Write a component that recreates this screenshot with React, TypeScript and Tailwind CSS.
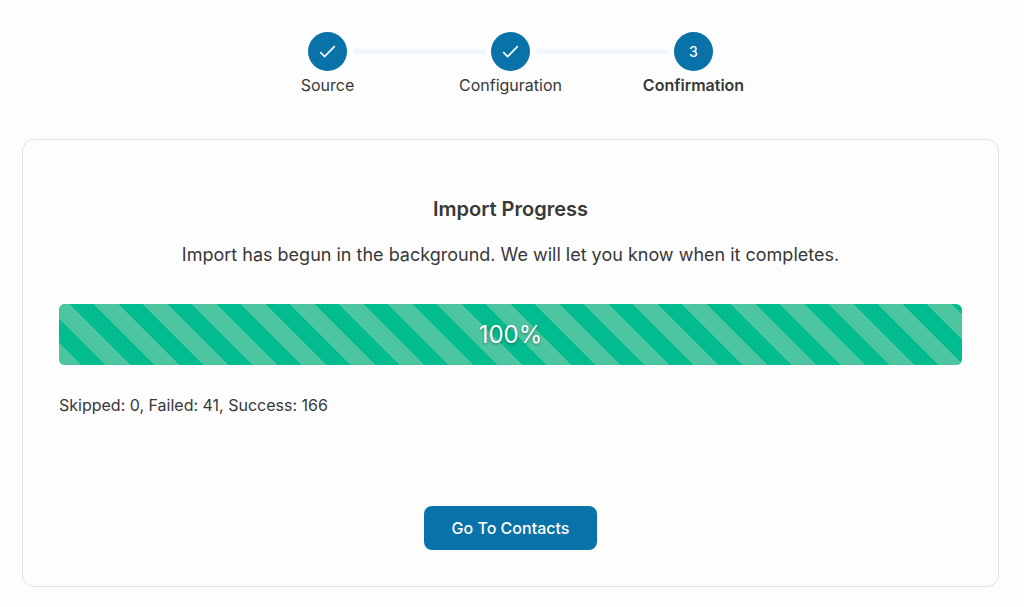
import { Fragment } from "react"

const steps = [
  { label: "Source", done: true },
  { label: "Configuration", done: true },
  { label: "Confirmation", done: false },
]

const result = { skipped: 0, failed: 41, success: 166 }

function CheckIcon() {
  return (
    <svg width="17" height="13" viewBox="0 0 17 13" fill="none" aria-hidden="true">
      <path d="M1.2 7.2 5.6 11.6 15.8 1.2" stroke="white" strokeWidth="1.7" />
    </svg>
  )
}

function Stepper() {
  return (
    <ol className="flex justify-center">
      {steps.map((step, index) => (
        <Fragment key={step.label}>
          {index > 0 && <li aria-hidden="true" className="mt-[17px] h-[5px] w-[133px] rounded-sm bg-[#eff6fc]" />}
          <li className="flex w-[50px] flex-col items-center">
            <span className="flex size-[39px] items-center justify-center rounded-full bg-[#0872a9] text-sm font-medium text-white">
              {step.done ? <CheckIcon /> : index + 1}
            </span>
            <span
              aria-current={step.done ? undefined : "step"}
              className={step.done ? "mt-0.5 text-base whitespace-nowrap" : "mt-0.5 text-base font-semibold whitespace-nowrap"}
            >
              {step.label}
            </span>
          </li>
        </Fragment>
      ))}
    </ol>
  )
}

function ProgressBar({ value }: { value: number }) {
  return (
    <div
      role="progressbar"
      aria-label="Import progress"
      aria-valuenow={value}
      aria-valuemin={0}
      aria-valuemax={100}
      className="grid h-[61px] overflow-hidden rounded-md bg-gray-100"
    >
      <div
        className="col-start-1 row-start-1 bg-[#02bb8e] bg-[linear-gradient(45deg,#4bc6a0_25%,transparent_25%,transparent_50%,#4bc6a0_50%,#4bc6a0_75%,transparent_75%)] bg-size-[49px_49px] bg-position-[-14px_0px]"
        style={{ width: `${value}%` }}
      />
      <span className="col-start-1 row-start-1 place-self-center text-2xl text-white [text-shadow:0_1px_3px_rgba(0,0,0,0.4)]">
        {value}%
      </span>
    </div>
  )
}

export default function App() {
  return (
    <main className="min-h-screen bg-[#fdfdfd] pt-8 pr-[25px] pb-5 pl-[22px] font-['Inter','Liberation_Sans',sans-serif] text-[#383838]">
      <Stepper />

      <section className="mt-[42px] rounded-xl border border-[#e2e2e2] px-9 pt-[55px] pb-9">
        <h1 className="text-center text-xl leading-7 font-semibold">Import Progress</h1>
        <p className="mt-[18px] mb-[35px] text-center text-lg leading-7">
          Import has begun in the background. We will let you know when it completes.
        </p>

        <ProgressBar value={100} />

        <p className="mt-7 text-base">
          Skipped: {result.skipped}, Failed: {result.failed}, Success: {result.success}
        </p>

        <div className="mt-[89px] flex justify-center">
          <button type="button" className="h-11 rounded-lg bg-[#0872a9] px-7 text-base font-medium text-white">
            Go To Contacts
          </button>
        </div>
      </section>
    </main>
  )
}
